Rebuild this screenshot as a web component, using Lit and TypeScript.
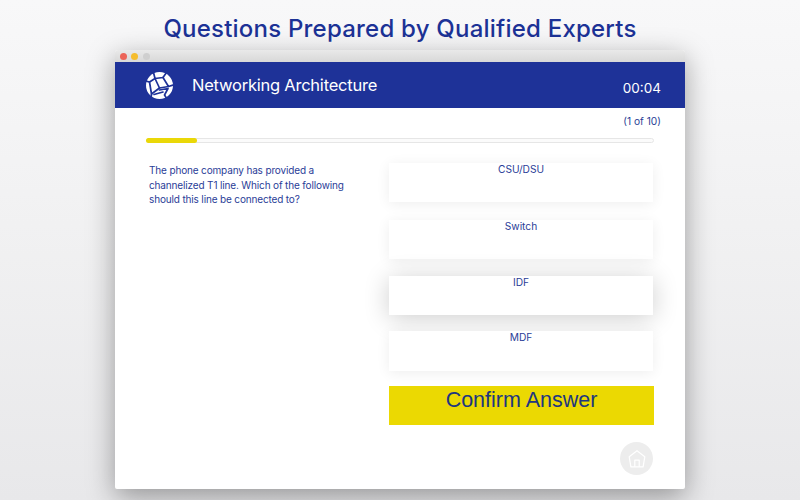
import { LitElement, html, css } from "lit";
import { customElement } from "lit/decorators.js";

@customElement("app-root")
export class AppRoot extends LitElement {
  static styles = css`
    :host {
      display: block;
      width: 800px;
      height: 500px;
      overflow: hidden;
      font-family: Inter, "Liberation Sans", sans-serif;
      color: #1f3399;
    }
    .page {
      height: 500px;
      box-sizing: border-box;
      display: flex;
      flex-direction: column;
      align-items: center;
      background: linear-gradient(180deg, #f8f8f9 0%, #f1f1f2 45%, #e8e8ea 100%);
    }
    h1 {
      margin: 0;
      height: 50px;
      line-height: 57px;
      font-size: 24px;
      font-weight: 450;
      letter-spacing: 0.22px;
      color: #1c3296;
      white-space: nowrap;
    }
    .window {
      width: 570px;
      height: 439px;
      display: flex;
      flex-direction: column;
      background: #fff;
      border-radius: 3px 3px 2px 2px;
      box-shadow: 0 8px 28px rgba(0, 0, 0, 0.36);
      overflow: hidden;
    }
    .titlebar {
      height: 12px;
      flex: none;
      display: flex;
      align-items: center;
      gap: 4.3px;
      padding-left: 5px;
      background: linear-gradient(180deg, #e9e9e9, #d8d8d8);
    }
    .dot {
      width: 7px;
      height: 7px;
      border-radius: 50%;
    }
    .red { background: #ec6559; }
    .yellow { background: #f5bd2e; }
    .grey { background: #cfcfcf; }
    .header {
      height: 46px;
      flex: none;
      display: flex;
      align-items: center;
      padding: 0 24px 0 31px;
      background: #1e3298;
      color: #fff;
    }
    .logo {
      width: 27px;
      height: 27px;
      flex: none;
      margin-right: 19px;
    }
    .name {
      font-size: 16.5px;
      font-weight: 400;
      letter-spacing: -0.23px;
      flex: 1;
      margin-top: -1px;
    }
    .timer {
      font-size: 13.5px;
      margin-top: 5px;
    }
    .content {
      flex: 1;
      display: flex;
      flex-direction: column;
      padding: 0 31px;
      position: relative;
    }
    .count {
      height: 30px;
      line-height: 26px;
      text-align: right;
      font-size: 10.2px;
      margin-right: -7px;
      color: #2b3f96;
    }
    .track {
      height: 5px;
      box-sizing: border-box;
      border: 1px solid #e6e6e6;
      border-radius: 3px;
      background: #fbfbfb;
      position: relative;
    }
    .fill {
      position: absolute;
      left: -1px;
      top: -1px;
      bottom: -1px;
      border-radius: 3px;
      background: #ead808;
    }
    .columns {
      display: flex;
      justify-content: space-between;
      margin-top: 20px;
    }
    .question {
      width: 205px;
      margin: 0 0 0 3px;
      font-size: 10px;
      line-height: 14.5px;
      letter-spacing: -0.15px;
      color: #2a3d97;
    }
    .answers {
      width: 265px;
      display: flex;
      flex-direction: column;
    }
    .option {
      height: 39px;
      margin-right: 1px;
      text-align: center;
      font-size: 10.2px;
      line-height: 13px;
      color: #2a3d97;
      background: #fff;
      box-shadow: 0 2px 14px rgba(0, 0, 0, 0.07);
    }
    .option.hover {
      box-shadow: 0 3px 26px rgba(0, 0, 0, 0.2);
    }
    .o1 { margin-bottom: 18px; }
    .o2 { margin-bottom: 17px; }
    .o3 { margin-bottom: 16px; }
    .o4 { height: 40px; margin-bottom: 15px; }
    .confirm {
      height: 39px;
      background: #ebd902;
      color: #20367f;
      text-align: center;
      font-family: "Liberation Sans", sans-serif;
      font-size: 21.5px;
      line-height: 29px;
    }
    .home {
      position: absolute;
      right: 32px;
      bottom: 14px;
      width: 33px;
      height: 33px;
      border-radius: 50%;
      background: #ededed;
      display: flex;
      align-items: center;
      justify-content: center;
    }
    .home svg {
      width: 20px;
      height: 20px;
    }
  `;

  render() {
    const answers = ["CSU/DSU", "Switch", "IDF", "MDF"];
    return html`
      <div class="page">
        <h1>Questions Prepared by Qualified Experts</h1>
        <div class="window">
          <div class="titlebar">
            <span class="dot red"></span><span class="dot yellow"></span><span class="dot grey"></span>
          </div>
          <div class="header">
            <svg class="logo" viewBox="0 0 27 27">
              <circle cx="13.5" cy="13.5" r="13.5" fill="#fff"></circle>
              <g fill="none" stroke="#1e3298" stroke-width="1.7" stroke-linejoin="round" stroke-linecap="round">
                <path d="M7.5 0.5 L9 6.5 L3.5 10 L0 9"></path>
                <path d="M9 6.5 L17 5.5 L20.5 0.5"></path>
                <path d="M17 5.5 L22.5 14.5 L27 13"></path>
                <path d="M22.5 14.5 L13.5 16 L9 6.5"></path>
                <path d="M13.5 16 L5.5 22 L3.5 10"></path>
                <path d="M5.5 22 L5 27"></path>
                <path d="M13.5 18 L22 16.5 L18.5 23 L21 27"></path>
                <path d="M8 22.5 L17 20"></path>
              </g>
            </svg>
            <div class="name">Networking Architecture</div>
            <div class="timer">00:04</div>
          </div>
          <div class="content">
            <div class="count">(1 of 10)</div>
            <div class="track"><div class="fill" style="width: 51px"></div></div>
            <div class="columns">
              <p class="question">
                The phone company has provided a channelized T1 line. Which of the following should this line be connected to?
              </p>
              <div class="answers">
                ${answers.map(
                  (a, i) =>
                    html`<div class="option o${i + 1} ${i === 2 ? "hover" : ""}">${a}</div>`
                )}
                <div class="confirm">Confirm Answer</div>
              </div>
            </div>
            <div class="home">
              <svg viewBox="0 0 18 18" fill="none" stroke="#fff" stroke-width="1.1" stroke-linejoin="round">
                <path d="M9 1.5 L16 7 L14.5 16 H3.5 L2 7 Z"></path>
                <path d="M7 16 V10 H11 V16"></path>
              </svg>
            </div>
          </div>
        </div>
      </div>
    `;
  }
}
